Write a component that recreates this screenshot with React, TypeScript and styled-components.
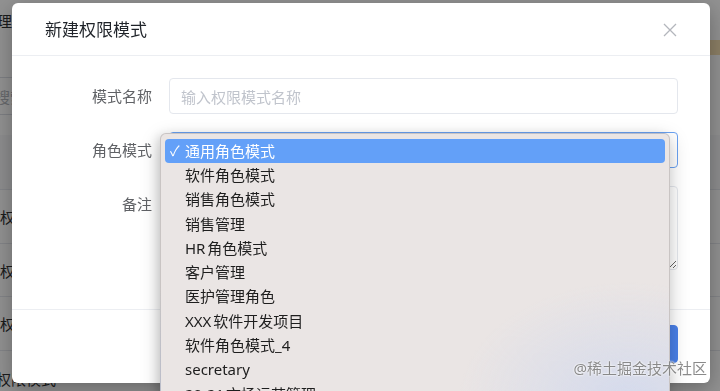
import React from "react";
import styled, { createGlobalStyle } from "styled-components";

const GlobalStyle = createGlobalStyle`
  html, body { margin: 0; padding: 0; overflow: hidden; width: 720px; height: 391px; }
  body { font-family: "Noto Sans", "Noto Sans CJK SC", sans-serif; background: #fff; }
  * { box-sizing: border-box; }
`;

const Page = styled.div`
  width: 720px;
  height: 391px;
  overflow: hidden;
  background: #fff;
`;

const PageRow = styled.div<{ $h: number; $line?: boolean; $bg?: string; $muted?: boolean; $end?: boolean }>`
  height: ${(p) => p.$h}px;
  display: flex;
  align-items: center;
  justify-content: ${(p) => (p.$end ? "flex-end" : "flex-start")};
  border-bottom: ${(p) => (p.$line ? "1px solid #e6e8ee" : "none")};
  background: ${(p) => p.$bg ?? "transparent"};
  color: ${(p) => (p.$muted ? "#b4b7bd" : "#303133")};
  font-size: 15px;
  white-space: nowrap;
`;

const PageText = styled.span<{ $shift: number }>`
  margin-left: ${(p) => p.$shift}px;
`;

const Band = styled.div`
  width: 160px;
  height: 100%;
  background: #f6dfb2;
`;

const SearchBox = styled.div`
  margin-left: -20px;
  width: 260px;
  height: 38px;
  border: 1px solid #dcdfe6;
  border-radius: 4px;
  display: flex;
  align-items: center;
  padding-left: 14px;
  color: #b4b7bd;
`;

const Overlay = styled.div`
  position: fixed;
  inset: 0;
  background: rgba(0, 0, 0, 0.43);
  padding: 3px 0 0 12px;
`;

const Modal = styled.div`
  width: 698px;
  height: 380px;
  background: #fff;
  border-radius: 6px;
  box-shadow: 0 6px 22px rgba(0, 0, 0, 0.3);
  display: flex;
  flex-direction: column;
`;

const Header = styled.div`
  height: 53px;
  flex: none;
  display: flex;
  align-items: center;
  justify-content: space-between;
  padding: 0 33px;
  border-bottom: 1px solid #eceef2;
`;

const Title = styled.div`
  font-family: "Noto Sans CJK SC", sans-serif;
  font-size: 17px;
  color: #1f2329;
  line-height: 24px;
`;

const CloseButton = styled.button`
  width: 14px;
  height: 14px;
  padding: 0;
  border: 0;
  background: none;
  display: flex;
  margin-top: 1px;
`;

const Body = styled.div`
  flex: 1;
  padding: 22px 32px 0 33px;
  display: flex;
  flex-direction: column;
  gap: 18px;
`;

const FormRow = styled.div`
  display: flex;
  align-items: flex-start;
`;

const Label = styled.label`
  width: 107px;
  margin-right: 17px;
  text-align: right;
  line-height: 36px;
  font-family: "Noto Sans CJK SC", sans-serif;
  font-size: 15px;
  color: #606266;
  flex: none;
`;

const TextInput = styled.input`
  flex: 1;
  height: 36px;
  border: 1px solid #e4e7ed;
  border-radius: 4px;
  padding: 0 11px;
  font-family: "Noto Sans CJK SC", sans-serif;
  font-size: 15px;
  color: #303133;
  outline: none;
  &::placeholder { color: #c0c4cc; }
`;

const SelectBox = styled.div`
  flex: 1;
  height: 36px;
  border: 1px solid #6aa2f2;
  border-radius: 4px;
  position: relative;
`;

const TextArea = styled.textarea`
  flex: 1;
  height: 84px;
  border: 1px solid #e4e7ed;
  border-radius: 4px;
  resize: vertical;
  outline: none;
  font-family: "Noto Sans CJK SC", sans-serif;
  font-size: 15px;
`;

const Footer = styled.div`
  flex: none;
  height: 74px;
  border-top: 1px solid #eceef2;
  padding: 15px 32px 0;
  display: flex;
  justify-content: flex-end;
  align-items: flex-start;
  gap: 12px;
`;

const Button = styled.button<{ $primary?: boolean }>`
  height: 38px;
  padding: 0 20px;
  border-radius: 4px;
  font-family: "Noto Sans CJK SC", sans-serif;
  font-size: 14px;
  border: 1px solid ${(p) => (p.$primary ? "#4a80e8" : "#dcdfe6")};
  background: ${(p) => (p.$primary ? "#4a80e8" : "#fff")};
  color: ${(p) => (p.$primary ? "#fff" : "#606266")};
`;

const Dropdown = styled.ul`
  position: absolute;
  left: -10px;
  top: 0;
  width: 510px;
  height: 270px;
  margin: 0;
  padding: 5px 0 0;
  list-style: none;
  border-radius: 6px;
  border: 1px solid rgba(0, 0, 0, 0.14);
  background:
    radial-gradient(ellipse 170px 120px at 92% 100%, rgba(208, 216, 238, 0.85), rgba(208, 216, 238, 0) 100%),
    #eae5e4;
  box-shadow: 0 6px 20px rgba(0, 0, 0, 0.22), -3px 2px 10px rgba(0, 0, 0, 0.1);
  z-index: 2;
`;

const Option = styled.li<{ $selected?: boolean }>`
  height: 24.3px;
  margin: 0 4px;
  padding: 0 0 2px 5px;
  display: flex;
  align-items: center;
  border-radius: 4px;
  font-family: "Noto Sans", "Noto Sans CJK SC", sans-serif;
  font-size: 15px;
  word-spacing: -2px;
  color: ${(p) => (p.$selected ? "#fff" : "#1e1e1e")};
  background: ${(p) => (p.$selected ? "#63a0f8" : "transparent")};
  white-space: nowrap;
`;

const Check = styled.span`
  width: 15px;
  flex: none;
  font-size: 14px;
`;

const Watermark = styled.div`
  position: fixed;
  right: 13px;
  bottom: 13px;
  font-family: "Noto Sans", "Noto Sans CJK SC", sans-serif;
  font-size: 15px;
  line-height: 20px;
  color: rgba(125, 125, 125, 0.9);
  text-shadow: 0 0 2px #fff, 0 0 2px #fff;
  z-index: 3;
`;

const options = [
  "通用角色模式",
  "软件角色模式",
  "销售角色模式",
  "销售管理",
  "HR 角色模式",
  "客户管理",
  "医护管理角色",
  "XXX 软件开发项目",
  "软件角色模式_4",
  "secretary",
  "20-21 市场运营管理",
];

export default function App() {
  return (
    <>
      <GlobalStyle />
      <Page>
        <PageRow $h={40}>
          <PageText $shift={-48}>权限管理</PageText>
        </PageRow>
        <PageRow $h={15} $end>
          <Band />
        </PageRow>
        <PageRow $h={22} />
        <PageRow $h={38} $muted>
          <SearchBox>搜索权限模式</SearchBox>
        </PageRow>
        <PageRow $h={20} />
        <PageRow $h={55} $line $bg="#f7f8fa" />
        <PageRow $h={54} $line>
          <PageText $shift={0}>权限模式一</PageText>
        </PageRow>
        <PageRow $h={53} $line>
          <PageText $shift={0}>权限模式二</PageText>
        </PageRow>
        <PageRow $h={54} $line>
          <PageText $shift={0}>权限模式三</PageText>
        </PageRow>
        <PageRow $h={54}>
          <PageText $shift={-4}>权限模式</PageText>
        </PageRow>
      </Page>
      <Overlay>
        <Modal>
          <Header>
            <Title>新建权限模式</Title>
            <CloseButton aria-label="关闭">
              <svg width="14" height="14" viewBox="0 0 14 14">
                <path d="M1 1L13 13M13 1L1 13" stroke="#b3b6bc" strokeWidth="1.3" fill="none" />
              </svg>
            </CloseButton>
          </Header>
          <Body>
            <FormRow>
              <Label>模式名称</Label>
              <TextInput placeholder="输入权限模式名称" />
            </FormRow>
            <FormRow>
              <Label>角色模式</Label>
              <SelectBox>
                <Dropdown>
                  {options.map((o, i) => (
                    <Option key={o} $selected={i === 0}>
                      <Check>{i === 0 ? "✓" : ""}</Check>
                      {o}
                    </Option>
                  ))}
                </Dropdown>
              </SelectBox>
            </FormRow>
            <FormRow>
              <Label>备注</Label>
              <TextArea />
            </FormRow>
          </Body>
          <Footer>
            <Button>取消</Button>
            <Button $primary>确定</Button>
          </Footer>
        </Modal>
      </Overlay>
      <Watermark>@稀土掘金技术社区</Watermark>
    </>
  );
}
